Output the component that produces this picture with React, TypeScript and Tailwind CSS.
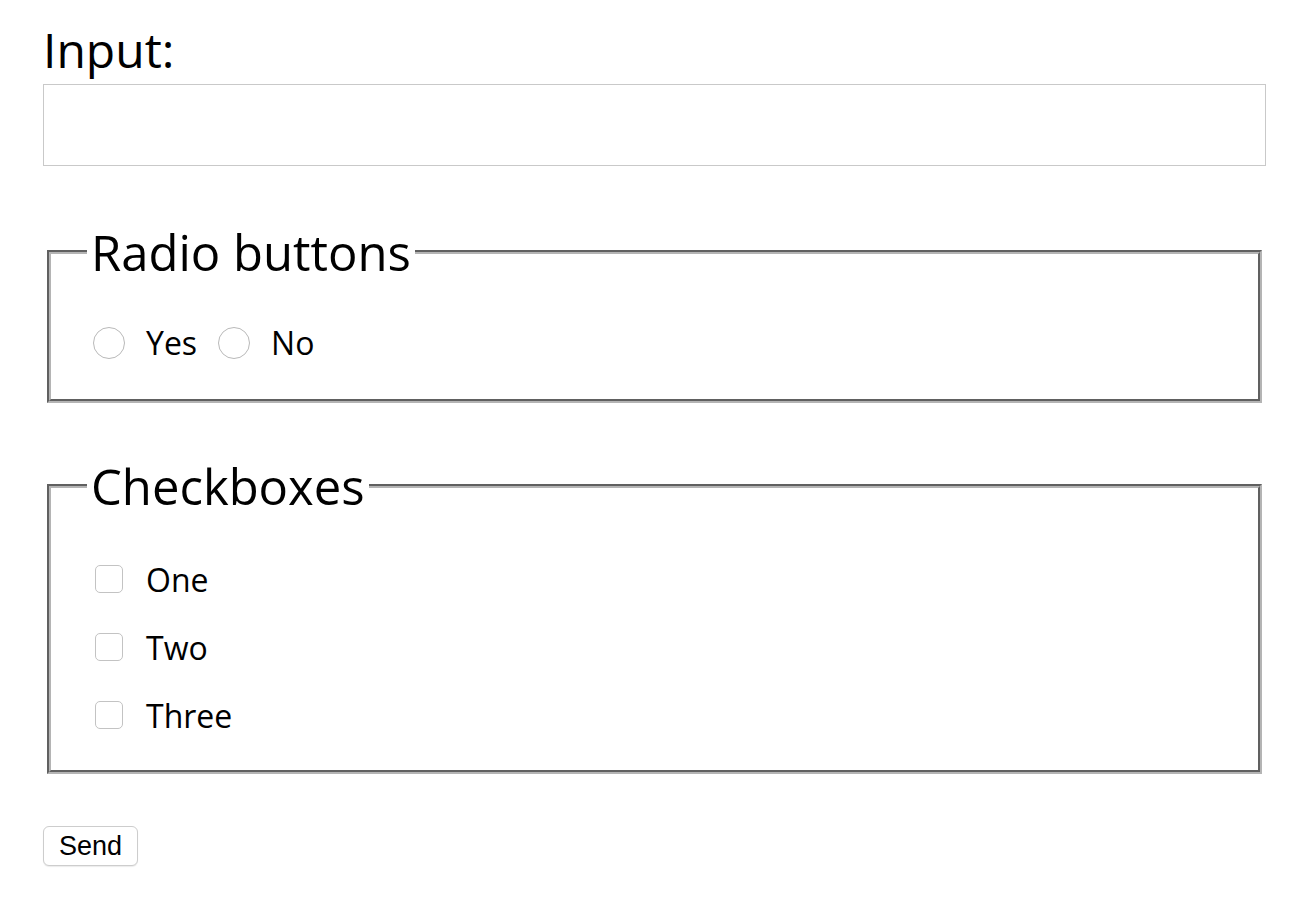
import { FC } from "react";

const Radio = ({ label }: { label: string }) => (
    <label className="flex items-center">
        <input
            type="radio"
            name="answer"
            className="appearance-none w-[32px] h-[32px] rounded-full border border-[#b9b9b9] bg-white"
        />
        <span className="ml-[21px] mr-[21px]">{label}</span>
    </label>
);

const Checkbox = ({ label }: { label: string }) => (
    <label className="flex items-center h-[44px]">
        <input
            type="checkbox"
            className="appearance-none w-[28px] h-[28px] ml-[2px] rounded-[5px] border border-[#c3c3c3] bg-white"
        />
        <span className="ml-[23px]">{label}</span>
    </label>
);

const fieldsetClass = "mx-[4px] pl-[36px] pr-[36px] border-[4px] [border-style:groove] border-[#b4b4b4]";

const App: FC = () => {
    return (
        <div className="min-h-screen bg-white text-black pl-[43px] pr-[38px] pt-[17px] font-['Open_Sans',sans-serif]">
            <label htmlFor="input" className="block text-[48px] leading-[normal]">Input:</label>
            <input id="input" type="text" className="mt-[2px] block w-full h-[82px] border border-[#c9c9c9] outline-none" />

            <fieldset className={`${fieldsetClass} mt-[53px] pt-[36px] pb-[35px]`}>
                <legend className="px-[4px] text-[49px] leading-[normal]">Radio buttons</legend>
                <div className="ml-[6px] flex text-[32px] leading-[normal]">
                    <Radio label="Yes" />
                    <Radio label="No" />
                </div>
            </fieldset>

            <fieldset className={`${fieldsetClass} mt-[50px] pt-[38px] pb-[33px]`}>
                <legend className="px-[4px] text-[49px] leading-[normal]">Checkboxes</legend>
                <div className="ml-[6px] flex flex-col gap-[24px] text-[32px] leading-[normal]">
                    <Checkbox label="One" />
                    <Checkbox label="Two" />
                    <Checkbox label="Three" />
                </div>
            </fieldset>

            <button
                type="button"
                className="mt-[52px] h-[40px] px-[15px] rounded-[6px] border border-[#cdcdcd] bg-white shadow-[0_1px_1px_rgba(0,0,0,0.08)] font-['Liberation_Sans',Arial,sans-serif] text-[27px] leading-none"
            >
                Send
            </button>
        </div>
    );
};

export default App;
